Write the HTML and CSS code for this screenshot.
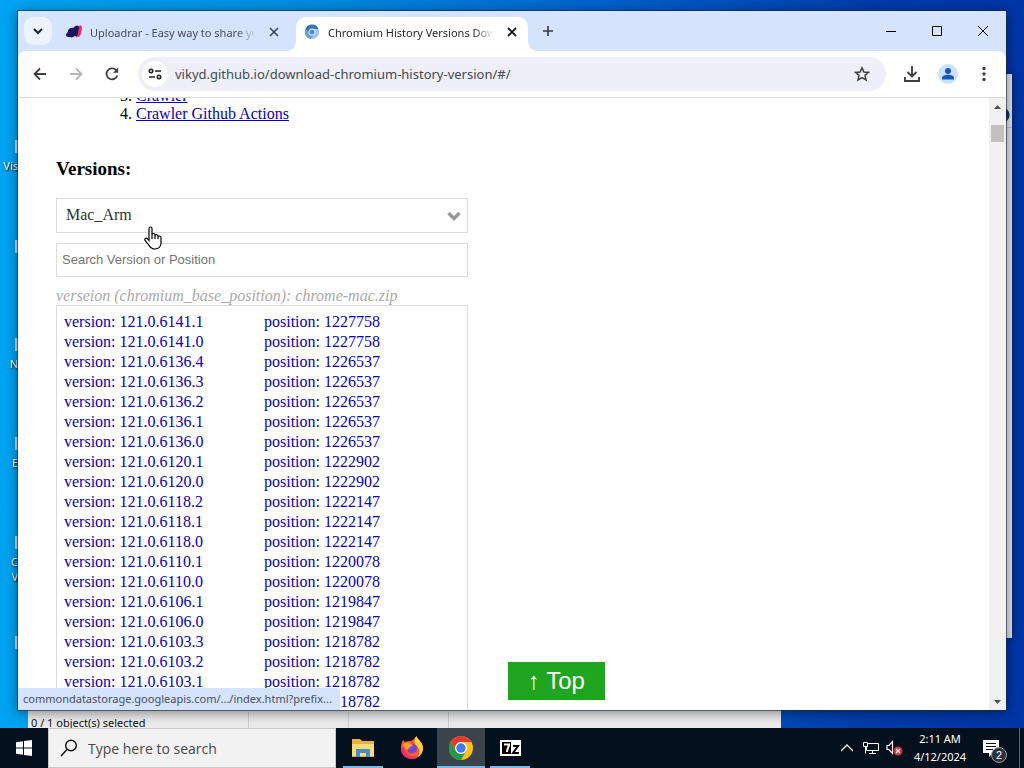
FILE: index.html
```
<!DOCTYPE html>
<html lang="en">

<head>
  <meta charset="UTF-8">
  <meta name="viewport" content="width=device-width, initial-scale=1.0">
  <title>Chromium History Versions Download</title>
  <link rel="stylesheet" href="styles.css">
</head>

<body>
  <div class="desktop">
    <ul class="shortcuts">
      <li class="vis">Vis</li>
      <li class="blank"></li>
      <li class="n">N</li>
      <li class="e">E</li>
      <li class="c">C<br>V</li>
      <li class="last"></li>
    </ul>

    <div class="back-window"><span></span></div>
    <div class="explorer">
      <span class="count">0 / 1 object(s) selected</span>
      <span></span>
      <span></span>
    </div>

    <div class="browser">
      <div class="tabs">
        <button class="tab-search" aria-label="Search tabs">
          <svg width="12" height="12" viewBox="0 0 12 12"><path d="M2 4l4 4 4-4" fill="none" stroke="#202124" stroke-width="2"/></svg>
        </button>
        <div class="tab">
          <svg width="16" height="16" viewBox="0 0 16 16"><path d="M8 3c2-2 4-1 5-1 2-1 3 0 3 2s-1 3-1 5-2 5-5 4z" fill="#f02b5c"/><path d="M0 11c0-2 2-2 2-4s3-4 5-3c2-1 3-3 5-2s1 3 0 5c1 3-1 6-3 5-2 1-3 2-5 1-2 0-4 0-4-2z" fill="#191460"/></svg>
          <span class="title">Uploadrar - Easy way to share your files</span>
          <button aria-label="Close tab"><svg width="10" height="10" viewBox="0 0 10 10"><path d="M1 1l8 8M9 1l-8 8" stroke="#3b4357" stroke-width="1.600"/></svg></button>
        </div>
        <div class="tab active">
          <svg width="16" height="16" viewBox="0 0 16 16"><circle cx="8" cy="8" r="7" fill="#9bc4ea"/><path d="M1.500 5A7 7 0 0 1 14.500 5H8a3.500 3.500 0 0 0-3.400 4z" fill="#3873a8"/><path d="M1.500 5A7 7 0 0 0 7 15l3-4.500a3.500 3.500 0 0 1-5.400-1.500z" fill="#6ba2d4"/><circle cx="8" cy="8" r="3.500" fill="#e8f3fc"/><circle cx="8" cy="8" r="2.600" fill="#4d8ec6"/></svg>
          <span class="title">Chromium History Versions Download</span>
          <button aria-label="Close tab"><svg width="10" height="10" viewBox="0 0 10 10"><path d="M1 1l8 8M9 1l-8 8" stroke="#1b1c1f" stroke-width="1.800"/></svg></button>
        </div>
        <button class="new-tab" aria-label="New tab">
          <svg width="12" height="12" viewBox="0 0 12 12"><path d="M6 1v10M1 6h10" stroke="#33394a" stroke-width="1.600"/></svg>
        </button>
        <div class="win-btns">
          <button aria-label="Minimize"><svg width="10" height="10" viewBox="0 0 10 10"><path d="M0 5.500h10" stroke="#000"/></svg></button>
          <button aria-label="Maximize"><svg width="10" height="10" viewBox="0 0 10 10"><path d="M.5.500h9v9h-9z" fill="none" stroke="#000"/></svg></button>
          <button aria-label="Close"><svg width="10" height="10" viewBox="0 0 10 10"><path d="M0 0l10 10M10 0L0 10" stroke="#000"/></svg></button>
        </div>
      </div>

      <div class="toolbar">
        <button aria-label="Back"><svg width="16" height="16" viewBox="0 0 16 16"><path d="M14 8H3M8 2.500L2.500 8 8 13.500" fill="none" stroke="#3c4043" stroke-width="1.800"/></svg></button>
        <button aria-label="Forward"><svg width="16" height="16" viewBox="0 0 16 16"><path d="M2 8h11M8 2.500L13.500 8 8 13.500" fill="none" stroke="#b4b6b9" stroke-width="1.800"/></svg></button>
        <button aria-label="Reload"><svg width="16" height="16" viewBox="0 0 16 16"><path d="M13.300 9.500A5.500 5.500 0 1 1 12 4l1.500 1.700" fill="none" stroke="#3c4043" stroke-width="1.800"/><path d="M14.200 1.500v5.200H9z" fill="#3c4043"/></svg></button>
        <div class="address">
          <button class="site-info" aria-label="Site information">
            <svg width="14" height="14" viewBox="0 0 14 14"><g fill="none" stroke="#202124" stroke-width="1.600"><circle cx="3" cy="4" r="1.700"/><path d="M7 4h6M1 10h6"/><circle cx="11" cy="10" r="1.700"/></g></svg>
          </button>
          <input type="text" class="url" aria-label="Address" value="vikyd.github.io/download-chromium-history-version/#/">
          <button class="star" aria-label="Bookmark this tab">
            <svg width="16" height="16" viewBox="0 0 16 16"><path d="M8 1.800l1.900 4.200 4.600.4-3.500 3 1 4.500L8 11.500l-4 2.400 1-4.500-3.500-3 4.600-.4z" fill="none" stroke="#3c4043" stroke-width="1.500"/></svg>
          </button>
        </div>
        <button aria-label="Downloads"><svg width="18" height="18" viewBox="0 0 18 18"><path d="M9 1v10M4.500 7L9 11.500 13.500 7M2 12v4h14v-4" fill="none" stroke="#3c4043" stroke-width="1.900"/></svg></button>
        <button aria-label="Profile"><svg width="20" height="20" viewBox="0 0 20 20"><circle cx="10" cy="10" r="10" fill="#cbe2fd"/><circle cx="10" cy="7" r="3" fill="#1a56b8"/><path d="M4 15.500V14c0-2 3-3.200 6-3.200s6 1.200 6 3.200v1.500z" fill="#1a56b8"/></svg></button>
        <button aria-label="Menu"><svg width="4" height="16" viewBox="0 0 4 16"><g fill="#3c4043"><circle cx="2" cy="2.500" r="1.700"/><circle cx="2" cy="8" r="1.700"/><circle cx="2" cy="13.500" r="1.700"/></g></svg></button>
      </div>

      <div class="view">
        <div class="page">
          <ol class="toc" start="3">
            <li><a href="###">Crawler</a></li>
            <li><a href="###">Crawler Github Actions</a></li>
          </ol>
          <h3>Versions:</h3>
          <div class="finder">
            <select class="os" aria-label="Platform">
              <option>Mac_Arm</option>
            </select>
            <input type="text" class="search" aria-label="Search" placeholder="Search Version or Position">
            <p class="tip">verseion (chromium_base_position): chrome-mac.zip</p>
            <ul class="list">
              <li><a href="###"><span>version: 121.0.6141.1</span><span>position: 1227758</span></a></li>
              <li><a href="###"><span>version: 121.0.6141.0</span><span>position: 1227758</span></a></li>
              <li><a href="###"><span>version: 121.0.6136.4</span><span>position: 1226537</span></a></li>
              <li><a href="###"><span>version: 121.0.6136.3</span><span>position: 1226537</span></a></li>
              <li><a href="###"><span>version: 121.0.6136.2</span><span>position: 1226537</span></a></li>
              <li><a href="###"><span>version: 121.0.6136.1</span><span>position: 1226537</span></a></li>
              <li><a href="###"><span>version: 121.0.6136.0</span><span>position: 1226537</span></a></li>
              <li><a href="###"><span>version: 121.0.6120.1</span><span>position: 1222902</span></a></li>
              <li><a href="###"><span>version: 121.0.6120.0</span><span>position: 1222902</span></a></li>
              <li><a href="###"><span>version: 121.0.6118.2</span><span>position: 1222147</span></a></li>
              <li><a href="###"><span>version: 121.0.6118.1</span><span>position: 1222147</span></a></li>
              <li><a href="###"><span>version: 121.0.6118.0</span><span>position: 1222147</span></a></li>
              <li><a href="###"><span>version: 121.0.6110.1</span><span>position: 1220078</span></a></li>
              <li><a href="###"><span>version: 121.0.6110.0</span><span>position: 1220078</span></a></li>
              <li><a href="###"><span>version: 121.0.6106.1</span><span>position: 1219847</span></a></li>
              <li><a href="###"><span>version: 121.0.6106.0</span><span>position: 1219847</span></a></li>
              <li><a href="###"><span>version: 121.0.6103.3</span><span>position: 1218782</span></a></li>
              <li><a href="###"><span>version: 121.0.6103.2</span><span>position: 1218782</span></a></li>
              <li><a href="###"><span>version: 121.0.6103.1</span><span>position: 1218782</span></a></li>
              <li><a href="###"><span>version: 121.0.6103.0</span><span>position: 1218782</span></a></li>
            </ul>
          </div>
        </div>
        <div class="scrollbar">
          <button aria-label="Scroll up"><svg width="7" height="4" viewBox="0 0 7 4"><path d="M0 4l3.500-4L7 4z" fill="#505050"/></svg></button>
          <div class="track"><div class="thumb"></div></div>
          <button aria-label="Scroll down"><svg width="7" height="4" viewBox="0 0 7 4"><path d="M0 0l3.500 4L7 0z" fill="#505050"/></svg></button>
        </div>
        <button class="top">↑ Top</button>
        <div class="status">commondatastorage.googleapis.com/.../index.html?prefix...</div>
      </div>
    </div>

    <svg class="cursor" width="20" height="24" viewBox="0 0 20 24"><path d="M6 14V2.500C6 .5 9 .5 9 2.500V9c0-2 3-2 3 0v1c0-2 3-1.500 3 .2v.8c0-1.600 3-1.200 3 .5V17c0 3-2 6-6 6-4 0-5-2-6.500-4.500L2 14.500c-1-1.800 1-3 2.200-1.800L6 14.500z" fill="#fff" stroke="#000" stroke-width="1.200"/><path d="M9 9v4M12 10v3M15 11v2" stroke="#000" stroke-width="1.200"/></svg>
  </div>

  <div class="taskbar">
    <button class="start" aria-label="Start"><svg width="16" height="16" viewBox="0 0 16 16"><path d="M0 2.200L7 1.200V7.500H0zM8 1l8-1v7.500H8zM0 8.500h7v6.300l-7-1zM8 8.500h8V16l-8-1z" fill="#fff"/></svg></button>
    <label class="find">
      <svg width="18" height="18" viewBox="0 0 18 18"><circle cx="11" cy="6.500" r="5.300" fill="none" stroke="#111" stroke-width="1.400"/><path d="M7 10.500L1 17" stroke="#111" stroke-width="1.400"/></svg>
      <input type="text" aria-label="Windows search" placeholder="Type here to search">
    </label>
    <div class="apps">
      <button class="open" aria-label="File Explorer"><svg width="22" height="20" viewBox="0 0 22 20"><path d="M0 1h8l2 2h12v16H0z" fill="#e9b23c"/><path d="M0 6h22v12H0z" fill="#fcdb78"/><path d="M4 19v-8h14v8h-4v-4H8v4z" fill="#3e8fd0"/></svg></button>
      <button aria-label="Firefox"><svg width="24" height="24" viewBox="0 0 24 24"><path d="M14 3c1-2 2-2 2.500-3 0 3 6 5 6.500 12 0 6-5 11-11 11S.500 18 1 12c0-4 1-6 2-8l2 2c2-1 4-1 6-1z" fill="#ff5a2c"/><path d="M16.500 0c0 3 6 5 6.500 12 0 4-2 7-5 9 2-4 2-9-2-12-2-2-2-6 .5-9z" fill="#ffd43b"/><path d="M1 12c0 7 5 11 11 11 3 0 5-1 7-3-8 2-14-1-15-9z" fill="#f22a72"/><circle cx="12" cy="12.500" r="5" fill="#7a44d0"/><path d="M3 8c4-3 8-1 10 2-4 0-3 3-6 4-2-1-3-3-4-6z" fill="#ff9a2b"/></svg></button>
      <button class="open active" aria-label="Chrome"><svg width="24" height="24" viewBox="0 0 24 24"><circle cx="12" cy="12" r="12" fill="#fbc116"/><path d="M1.600 6A12 12 0 0 1 22.400 6H12L7 15z" fill="#e33b2e"/><path d="M1.600 6A12 12 0 0 0 12 24l5.200-9H7z" fill="#229a48"/><circle cx="12" cy="12" r="6" fill="#fff"/><circle cx="12" cy="12" r="4.700" fill="#3b7de8"/></svg></button>
      <button class="open" aria-label="7-Zip"><svg width="21" height="16" viewBox="0 0 21 16"><path d="M0 0h21v16H0z" fill="#fff"/><path d="M2 2h9v12H2z" fill="#000"/><path d="M4 4.500h5c0 3-2 4-2 7.500" fill="none" stroke="#fff" stroke-width="2"/><path d="M13 6h5l-5 7h6" fill="none" stroke="#000" stroke-width="2"/></svg></button>
    </div>
    <div class="tray">
      <button aria-label="Show hidden icons"><svg width="12" height="8" viewBox="0 0 12 8"><path d="M0 7l6-6 6 6" fill="none" stroke="#fff" stroke-width="1.300"/></svg></button>
      <button aria-label="Network"><svg width="16" height="14" viewBox="0 0 16 14"><path d="M5 2.500h10.500v7H3.500V6M.5 1.500h4v4h-4zM2.500 5.500v7M9.500 9.500v3M6 12.500h7" fill="none" stroke="#fff"/></svg></button>
      <button aria-label="Volume"><svg width="18" height="16" viewBox="0 0 18 16"><path d="M1 5.500h2l3.500-4v12L3 9.500H1z" fill="none" stroke="#fff" stroke-width="1.200"/><circle cx="12" cy="11" r="4.500" fill="#d8343c"/><path d="M10 9l4 4M14 9l-4 4" stroke="#fff" stroke-width="1.200"/></svg></button>
      <div class="clock"><span>2:11 AM</span><span>4/12/2024</span></div>
      <button class="notes" aria-label="Notifications">
        <svg width="16" height="17" viewBox="0 0 16 17"><path d="M0 0h16v13h-6l-4 4v-4H0z" fill="#fff"/><path d="M3 3.500h10M3 6.500h10M3 9.500h7" stroke="#04101f"/></svg>
        <span class="badge">2</span>
      </button>
      <span class="peek"></span>
    </div>
  </div>
</body>

</html>
```
FILE: styles.css
```
* {
  margin: 0;
  padding: 0;
  box-sizing: border-box;
}

body {
  height: 100vh;
  display: flex;
  flex-direction: column;
  overflow: hidden;
  font-family: "Noto Sans", "Open Sans", sans-serif;
  font-size: 11px;
}

ul {
  list-style: none;
}

svg {
  display: block;
  flex: none;
}

button {
  display: flex;
  align-items: center;
  justify-content: center;
  border: 0;
  background: none;
  flex: none;
}

input,
select {
  border: 0;
  outline: 0;
  min-width: 0;
}

.desktop {
  flex: 1;
  min-height: 0;
  position: relative;
  overflow: hidden;
  background: linear-gradient(90deg, #00a4f2 0%, #0090e4 28%, #0060cc 60%, #003cac 85%, #0035a6 100%);
}

/* desktop icons */
.shortcuts li {
  position: absolute;
  left: 0;
  width: 18px;
  padding-top: 18px;
  line-height: 15px;
  text-align: right;
  color: #fff;
  text-shadow: 1px 1px 2px #000;
}

.shortcuts li::before {
  content: "";
  position: absolute;
  top: 0;
  right: 0;
  width: 3px;
  height: 13px;
  background: #c5dff0;
}

.shortcuts .vis {
  top: 140px;
}

.shortcuts .blank {
  top: 240px;
}

.shortcuts .n {
  top: 338px;
}

.shortcuts .e {
  top: 437px;
}

.shortcuts .c {
  top: 536px;
}

.shortcuts .last {
  top: 636px;
}

/* windows behind the browser */
.back-window {
  position: absolute;
  top: 74px;
  right: 12px;
  bottom: 90px;
  width: 300px;
  background: #e4e6e9;
  box-shadow: 0 0 8px rgba(0, 0, 0, .4);
}

.back-window span {
  display: block;
  height: 54px;
  border-bottom: 1px solid #c4c6ca;
  background: radial-gradient(circle at 290px 41px, #1b3864 7px, transparent 8px);
}

.explorer {
  position: absolute;
  left: 28px;
  bottom: 0;
  width: 753px;
  height: 60px;
  display: flex;
  align-items: flex-end;
  background: #ececec;
}

.explorer span {
  width: 100px;
  height: 16px;
  border-right: 1px solid #cfcfcf;
}

.explorer .count {
  width: 221px;
  line-height: 22px;
  height: 16px;
  padding-left: 3px;
  color: #111;
}

/* browser */
.browser {
  position: absolute;
  top: 11px;
  left: 18px;
  right: 18px;
  bottom: 18px;
  display: flex;
  flex-direction: column;
  background: #d6e3fc;
  box-shadow: 0 0 0 1px rgba(20, 40, 70, .6), 0 2px 12px rgba(0, 0, 0, .5);
}

.tabs {
  height: 40px;
  display: flex;
  align-items: center;
  padding-left: 6px;
}

.tab-search {
  width: 28px;
  height: 28px;
  border-radius: 9px;
  background: #ecf2fe;
}

.tab {
  width: 232px;
  height: 34px;
  margin-top: 6px;
  margin-left: 6px;
  display: flex;
  align-items: center;
  gap: 8px;
  padding: 0 8px 4px;
  position: relative;
  color: #444b5e;
}

.tab.active {
  background: #fff;
  border-radius: 10px 10px 0 0;
  color: #25272b;
}

.tab.active::before,
.tab.active::after {
  content: "";
  position: absolute;
  bottom: 0;
  width: 10px;
  height: 10px;
}

.tab.active::before {
  left: -10px;
  background: radial-gradient(circle at 0 0, transparent 10px, #fff 10px);
}

.tab.active::after {
  right: -10px;
  background: radial-gradient(circle at 100% 0, transparent 10px, #fff 10px);
}

.tab .title {
  flex: 1;
  white-space: nowrap;
  overflow: hidden;
  -webkit-mask-image: linear-gradient(90deg, #000 88%, transparent);
  mask-image: linear-gradient(90deg, #000 88%, transparent);
}

.tab button {
  width: 16px;
  height: 16px;
  margin-left: 2px;
}

.new-tab {
  width: 28px;
  height: 28px;
  margin-left: 6px;
}

.win-btns {
  margin-left: auto;
  display: flex;
}

.win-btns button {
  width: 46px;
  height: 38px;
}

.toolbar {
  height: 47px;
  display: flex;
  align-items: center;
  padding: 0 4px;
  background: #fff;
  border-radius: 8px 8px 0 0;
  border-bottom: 1px solid #d9dbdf;
}

.toolbar > button {
  width: 36px;
  height: 34px;
}

.address {
  flex: 1;
  height: 34px;
  margin: 0 8px;
  display: flex;
  align-items: center;
  padding: 0 10px 0 4px;
  border-radius: 17px;
  background: #eeeff8;
}

.site-info {
  width: 26px;
  height: 26px;
  border-radius: 50%;
  background: #fff;
}

.url {
  flex: 1;
  padding-left: 7px;
  background: none;
  font-family: "Noto Sans", "Open Sans", sans-serif;
  font-size: 13px;
  color: #454950;
}

.star {
  width: 28px;
  height: 28px;
}

.view {
  flex: 1;
  min-height: 0;
  display: flex;
  position: relative;
  overflow: hidden;
  background: #fff;
}

.page {
  flex: 1;
  padding: 0 38px;
  font-family: "Liberation Serif", "Times New Roman", serif;
  font-size: 16px;
  line-height: 18px;
}

/* scrolled down to the versions */
.toc {
  margin-top: -11px;
  padding-left: 80px;
}

.toc a {
  color: #0a00b4;
}

.page h3 {
  margin: 35px 0 18px;
  font-size: 19px;
  line-height: 22px;
}

.finder {
  width: 412px;
  max-width: 100%;
  display: flex;
  flex-direction: column;
}

.os {
  height: 35px;
  padding: 0 9px 2px;
  border: 1px solid #dcdcdc;
  border-radius: 0;
  appearance: none;
  background: #fff url("data:image/svg+xml,%3Csvg xmlns='http://www.w3.org/2000/svg' width='14' height='10'%3E%3Cpath d='M1.500 2L7 7.500 12.500 2' fill='none' stroke='%23999' stroke-width='3.500'/%3E%3C/svg%3E") no-repeat right 6px center;
  font-family: "Liberation Serif", "Times New Roman", serif;
  font-size: 16px;
  color: #333;
}

.search {
  height: 34px;
  margin-top: 10px;
  padding: 0 5px 2px;
  border: 1px solid #dcdcdc;
  font-family: "Liberation Sans", Arial, sans-serif;
  font-size: 13px;
}

.search::placeholder {
  color: #757575;
}

.tip {
  margin-top: 10px;
  font-style: italic;
  color: #aaa;
}

.list {
  padding: 6px 7px;
  border: 1px solid #dcdcdc;
}

.list a {
  display: flex;
  line-height: 20px;
  text-decoration: none;
  color: #0a00b4;
}

.list span {
  flex: none;
  width: 200px;
}

.scrollbar {
  width: 17px;
  display: flex;
  flex-direction: column;
  background: #f1f1f1;
}

.scrollbar button {
  width: 17px;
  height: 17px;
}

.track {
  flex: 1;
  padding: 10px 2px;
}

.thumb {
  height: 17px;
  background: #c1c1c1;
}

.top {
  position: absolute;
  left: 490px;
  bottom: 10px;
  width: 97px;
  height: 38px;
  background: #1fa51f;
  color: #fff;
  font-family: "Liberation Sans", Arial, sans-serif;
  font-size: 24px;
}

.status {
  position: absolute;
  left: 0;
  bottom: 0;
  height: 22px;
  padding: 0 8px 0 5px;
  line-height: 22px;
  white-space: nowrap;
  border-radius: 0 4px 0 0;
  background: #d6e3fc;
  color: #474f60;
}

.cursor {
  position: absolute;
  left: 143px;
  top: 226px;
}

/* taskbar */
.taskbar {
  height: 40px;
  display: flex;
  background: #03111f;
  color: #fff;
}

.start {
  width: 48px;
}

.find {
  width: 288px;
  display: flex;
  align-items: center;
  gap: 10px;
  padding: 0 11px;
  background: #f2f2f2;
  border: 1px solid #c8c8c8;
}

.find input {
  flex: 1;
  background: none;
  font-family: "Open Sans", "Noto Sans", sans-serif;
  font-size: 14px;
}

.find input::placeholder {
  color: #484848;
}

.apps {
  flex: 1;
  display: flex;
  gap: 1px;
  padding-left: 3px;
}

.apps button {
  width: 48px;
  position: relative;
}

.apps .active {
  background: #3a444d;
}

.apps .open::after {
  content: "";
  position: absolute;
  left: 4px;
  right: 4px;
  bottom: 0;
  height: 2px;
  background: #76b9ed;
}

.apps .active::after {
  left: 0;
  right: 0;
}

.tray {
  display: flex;
  align-items: stretch;
}

.tray button {
  width: 24px;
}

.clock {
  width: 66px;
  display: flex;
  flex-direction: column;
  align-items: center;
  justify-content: center;
  line-height: 18px;
}

.tray .notes {
  width: 46px;
  padding-right: 10px;
  position: relative;
}

.badge {
  position: absolute;
  right: 12px;
  bottom: 5px;
  width: 16px;
  height: 16px;
  line-height: 14px;
  border: 1px solid #9aa0a6;
  border-radius: 50%;
  background: #2c3238;
  color: #fff;
  font-size: 11px;
}

.peek {
  width: 5px;
  border-left: 1px solid #5b6570;
}
```
